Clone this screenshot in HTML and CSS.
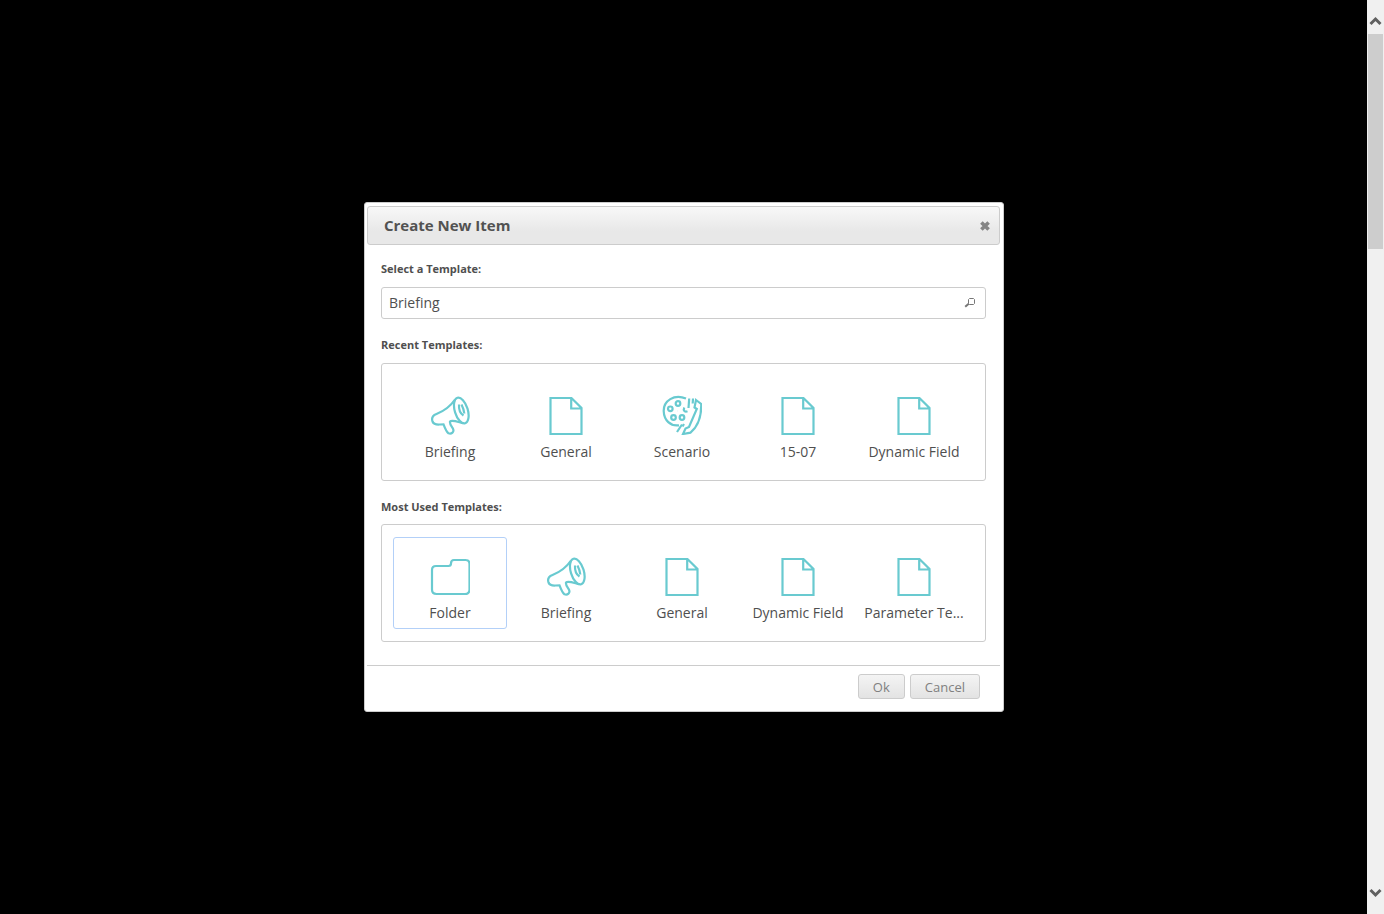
FILE: index.html
```html
<!DOCTYPE html>
<html lang="en">
<head>
<meta charset="utf-8">
<title>Create New Item</title>
<link rel="stylesheet" href="styles.css">
</head>
<body>
<svg class="sprite" aria-hidden="true">
  <symbol id="megaphone" viewBox="0 0 40 40">
    <path d="M25 4.500C20 12 14 16 6.500 19C2.500 20.500 1.500 23.500 2.500 26.500C3.500 29 6 29.700 9.500 29.500L13.500 29.300C14.500 32 16 36.500 18.500 38.300C21.500 39.300 24.500 37 23 33.700C22 32 19.500 29.500 20 26.500C22 24.500 28 27 33.500 28.300"/>
    <ellipse cx="31.300" cy="15.500" rx="6.500" ry="13.300" transform="rotate(-17 31.300 15.500)"/>
    <path d="M29 9.500C28.700 14 30.300 18.500 33.500 20.500M31.500 9.500C33 12.500 34 15.500 34.300 18.500"/>
  </symbol>
  <symbol id="page" viewBox="0 0 40 40">
    <path d="M4.500 3H25.500L35.500 13V39H4.500ZM25.200 3.500V13.500H35.500"/>
  </symbol>
  <symbol id="palette" viewBox="0 0 40 40">
    <path d="M24 3.500C12 -1.500 1.500 6 1.700 16C2 25.500 8.500 31.500 17 30.300M27.200 3.500L26.500 13M31 3.500L30.700 8.500M15 37L20 29.500"/>
    <circle cx="16" cy="8.500" r="2.300"/><circle cx="8.300" cy="13.800" r="2.300"/><circle cx="11.500" cy="22.500" r="2.300"/><circle cx="20" cy="22.500" r="2.300"/>
    <path d="M22.300 12.500C20.800 15.500 23 17.300 25.500 16.300M15.500 16H15.600M22 29L20.500 31.500"/>
    <path d="M34 5L39.200 9C39.500 20 36.500 31 28.500 37.700L21 39L23.500 33.500L27 32L34.800 14L32.500 12.500Z"/>
  </symbol>
  <symbol id="folder" viewBox="0 0 40 40">
    <path d="M6 10H18.500C20.500 10 21 9 21 7.500C21 5 22 4 24 4H35.500C38 4 39.500 5.300 39.500 8V33.500C39.500 36.500 38 38 35 38H6.500C3.500 38 2 36.500 2 33.500V14C2 11.300 3.300 10 6 10Z"/>
  </symbol>
</svg>
<div class="screen">
  <main class="backdrop">
    <form class="dialog" role="dialog" aria-labelledby="dialog-title">
      <header class="dialog-header">
        <h1 class="dialog-title" id="dialog-title">Create New Item</h1>
        <button class="close" type="button" aria-label="Close"><svg class="close-icon" viewBox="0 0 10 10"><path d="M2 2L8 8M8 2L2 8"/></svg></button>
      </header>
      <div class="dialog-body">
        <label class="caption" for="template">Select a Template:</label>
        <div class="search">
          <input class="search-input" id="template" type="text" value="Briefing">
          <button class="search-button" type="button" aria-label="Search"><svg class="search-icon" viewBox="0 0 12 12"><path d="M5.500 1.500H9.500L10.500 2.500V6.500L9.500 7.500H5.500L4.500 6.500V2.500Z"/><path class="handle" d="M4.700 6.800L1.200 9.800"/></svg></button>
        </div>
        <h2 class="caption">Recent Templates:</h2>
        <div class="templates">
          <button class="template" type="button"><svg class="icon"><use href="#megaphone"/></svg><span class="name">Briefing</span></button>
          <button class="template" type="button"><svg class="icon"><use href="#page"/></svg><span class="name">General</span></button>
          <button class="template" type="button"><svg class="icon"><use href="#palette"/></svg><span class="name">Scenario</span></button>
          <button class="template" type="button"><svg class="icon"><use href="#page"/></svg><span class="name">15-07</span></button>
          <button class="template" type="button"><svg class="icon"><use href="#page"/></svg><span class="name">Dynamic Field</span></button>
        </div>
        <h2 class="caption">Most Used Templates:</h2>
        <div class="templates">
          <button class="template selected" type="button"><svg class="icon"><use href="#folder"/></svg><span class="name">Folder</span></button>
          <button class="template" type="button"><svg class="icon"><use href="#megaphone"/></svg><span class="name">Briefing</span></button>
          <button class="template" type="button"><svg class="icon"><use href="#page"/></svg><span class="name">General</span></button>
          <button class="template" type="button"><svg class="icon"><use href="#page"/></svg><span class="name">Dynamic Field</span></button>
          <button class="template" type="button"><svg class="icon"><use href="#page"/></svg><span class="name">Parameter Te...</span></button>
        </div>
      </div>
      <footer class="dialog-footer">
        <button class="action" type="button">Ok</button>
        <button class="action" type="button">Cancel</button>
      </footer>
    </form>
  </main>
  <div class="scrollbar">
    <button class="arrow" type="button" aria-label="Scroll up"><svg class="arrow-icon" viewBox="0 0 13 10"><path d="M1.500 8L6.500 3L11.500 8"/></svg></button>
    <div class="track"><div class="thumb"></div></div>
    <button class="arrow" type="button" aria-label="Scroll down"><svg class="arrow-icon" viewBox="0 0 13 10"><path d="M1.500 2L6.500 7L11.500 2"/></svg></button>
  </div>
</div>
</body>
</html>
```
FILE: styles.css
```css
* {
  box-sizing: border-box;
}

body {
  margin: 0;
  background: #000;
  color: #4f4f4f;
  font-family: "Open Sans", "Noto Sans", sans-serif;
  font-size: 14px;
  line-height: 20px;
}

button,
input {
  margin: 0;
  padding: 0;
  border: 0;
  background: none;
  color: inherit;
  font: inherit;
}

svg {
  display: block;
  fill: none;
}

.sprite {
  display: none;
}

.screen {
  display: flex;
  min-height: 100vh;
}

.backdrop {
  display: flex;
  flex: 1;
  align-items: center;
  justify-content: center;
  padding-left: 1px;
}

.dialog {
  width: 640px;
  max-width: 100%;
  padding: 3px 3px 0 2px;
  border: 1px solid #ccc;
  border-radius: 3px;
  background: #fff;
}

.dialog-header {
  display: flex;
  align-items: center;
  justify-content: space-between;
  height: 39px;
  padding: 0 8px 1px 16px;
  border: 1px solid #ccc;
  border-radius: 3px;
  background: linear-gradient(#f8f8f8, #e8e8e8 65%);
}

.dialog-title {
  margin: 0;
  color: #525252;
  font-size: 15px;
  line-height: 20px;
}

.close-icon {
  width: 12px;
  height: 12px;
  margin-top: 2px;
  stroke: #858585;
  stroke-width: 3px;
}

.dialog-body {
  padding: 16px 14px 23px;
}

.caption {
  display: block;
  margin: 0 0 10px;
  font-size: 11px;
  font-weight: bold;
  line-height: 16px;
}

.search {
  display: flex;
  height: 32px;
  margin-bottom: 18px;
  border: 1px solid #ccc;
  border-radius: 3px;
}

.search-input {
  flex: 1;
  min-width: 0;
  padding: 0 7px;
  outline: 0;
}

.search-button {
  padding: 0 9px;
}

.search-icon {
  width: 12px;
  height: 12px;
  stroke: #777;
  stroke-width: 1px;
}

.handle {
  stroke-width: 2px;
}

.templates {
  display: grid;
  grid-template-columns: repeat(5, 1fr);
  gap: 2px;
  padding: 12px 14px 12px 11px;
  border: 1px solid #ccc;
  border-radius: 3px;
}

.templates + .caption {
  margin: 18px 0 9px;
}

.template {
  display: flex;
  flex-direction: column;
  align-items: center;
  gap: 7px;
  min-width: 0;
  height: 92px;
  padding: 18px 5px 0;
  border: 1px solid transparent;
  border-radius: 3px;
}

.selected {
  border-color: #b3d0f8;
}

.icon {
  flex: none;
  width: 40px;
  height: 40px;
  stroke: #69cad0;
  stroke-width: 2.2px;
}

.name {
  max-width: 100%;
  white-space: nowrap;
}

.dialog-footer {
  display: flex;
  justify-content: flex-end;
  gap: 5px;
  padding: 8px 20px 12px;
  border-top: 1px solid #ccc;
}

.action {
  height: 25px;
  padding: 0 14px;
  border: 1px solid #ccc;
  border-radius: 3px;
  background: linear-gradient(#f4f4f4, #e3e3e3);
  color: #808080;
  font-size: 13px;
}

.scrollbar {
  display: flex;
  flex: none;
  flex-direction: column;
  width: 17px;
  background: #f0f0f0;
}

.arrow {
  display: flex;
  align-items: flex-end;
  justify-content: center;
  height: 34px;
  padding-bottom: 8px;
}

.arrow-icon {
  width: 13px;
  height: 10px;
  stroke: #606060;
  stroke-width: 3px;
}

.track {
  flex: 1;
  padding: 0 1px;
}

.thumb {
  height: 215px;
  background: #cdcdcd;
}

.track + .arrow {
  padding-bottom: 16px;
}
```
